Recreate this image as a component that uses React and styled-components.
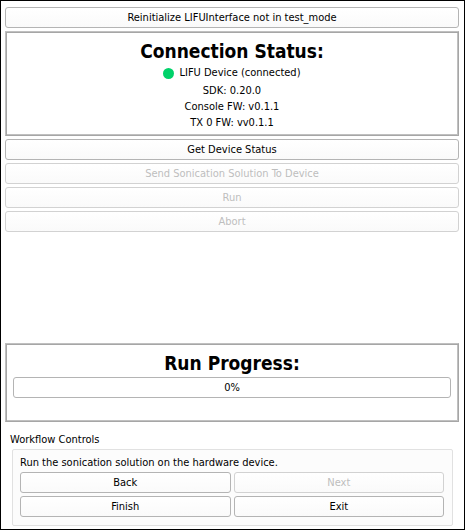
import React from 'react'
import styled, { createGlobalStyle } from 'styled-components'

const GlobalStyle = createGlobalStyle`
  * {
    box-sizing: border-box;
  }

  body {
    margin: 0;
    background: #ffffff;
    color: #000000;
    font-family: "DejaVu Sans Condensed", "DejaVu Sans", sans-serif;
    font-stretch: condensed;
    font-size: 11px;
    line-height: 16px;
  }
`;

const Panel = styled.div`
  min-height: 100vh;
  display: flex;
  flex-direction: column;
  gap: 3px;
  padding: 6px 5px 3px 4px;
  border: 1px solid #000000;
`;

const Button = styled.button`
  height: 21px;
  padding: 0 8px;
  border: 1px solid #b4b4b4;
  border-radius: 3px;
  background: linear-gradient(#ffffff, #fafafa);
  color: #000000;
  font: inherit;
  line-height: 19px;

  &:disabled {
    border-color: #d2d2d2;
    color: #bebebe;
  }
`;

const Frame = styled.section`
  display: flex;
  flex-direction: column;
  align-items: center;
  padding: 7px;
  border: 1px solid;
  border-color: #c0c0c0 #a6a6a6 #a6a6a6 #c0c0c0;
  box-shadow: inset 1px 1px #a6a6a6, inset -1px -1px #c0c0c0;
`;

const StatusFrame = styled(Frame)`
  height: 105px;
`;

const ProgressFrame = styled(Frame)`
  height: 79px;
`;

const Title = styled.h2`
  margin: 0;
  font-size: 19px;
  font-weight: bold;
  line-height: 24px;
`;

const Device = styled.div`
  display: flex;
  align-items: center;
  gap: 5px;
  line-height: 20px;
`;

const Dot = styled.span`
  width: 11px;
  height: 11px;
  border-radius: 50%;
  background: #00d26a;
`;

const Spacer = styled.div`
  flex: 1;
`;

const Bar = styled.div`
  width: 100%;
  height: 21px;
  margin-top: 2px;
  border: 1px solid #b4b4b4;
  border-radius: 3px;
  line-height: 19px;
  text-align: center;
`;

const Workflow = styled.fieldset`
  min-width: 0;
  margin: 6px 6px 0 7px;
  padding: 0;
  border: 0;
`;

const Legend = styled.legend`
  margin-left: -2px;
  padding: 0;
  line-height: 18px;
`;

const Group = styled.div`
  display: grid;
  grid-template-columns: 1fr 1fr;
  gap: 3px;
  padding: 7px 8px 8px 7px;
  border: 1px solid #e1e1e1;
  border-radius: 2px;
  background: #fcfcfc;
`;

const Hint = styled.div`
  grid-column: 1 / -1;
  line-height: 12px;
`;

const firmware = ['SDK: 0.20.0', 'Console FW: v0.1.1', 'TX 0 FW: vv0.1.1'];

export default () => {
  const progress = 0;

  return (
    <Panel>
      <GlobalStyle />
      <Button>Reinitialize LIFUInterface not in test_mode</Button>
      <StatusFrame>
        <Title>Connection Status:</Title>
        <Device><Dot />LIFU Device (connected)</Device>
        {firmware.map(line => <div key={line}>{line}</div>)}
      </StatusFrame>
      <Button>Get Device Status</Button>
      <Button disabled>Send Sonication Solution To Device</Button>
      <Button disabled>Run</Button>
      <Button disabled>Abort</Button>
      <Spacer />
      <ProgressFrame>
        <Title id="run-progress">Run Progress:</Title>
        <Bar
          role="progressbar"
          aria-labelledby="run-progress"
          aria-valuemin={0}
          aria-valuemax={100}
          aria-valuenow={progress}
        >
          {progress}%
        </Bar>
      </ProgressFrame>
      <Workflow>
        <Legend>Workflow Controls</Legend>
        <Group>
          <Hint>Run the sonication solution on the hardware device.</Hint>
          <Button>Back</Button>
          <Button disabled>Next</Button>
          <Button>Finish</Button>
          <Button>Exit</Button>
        </Group>
      </Workflow>
    </Panel>
  );
}
